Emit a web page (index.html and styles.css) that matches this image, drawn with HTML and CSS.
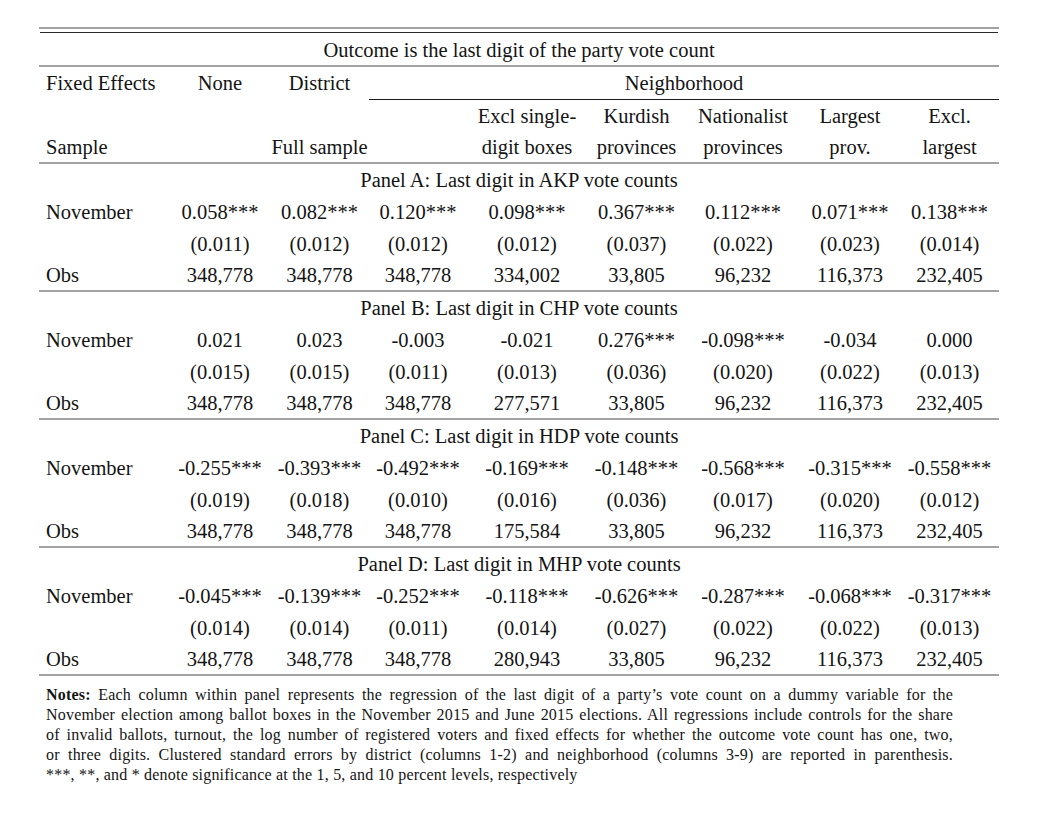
FILE: index.html
```html
<!DOCTYPE html>
<html>
<head>
<meta charset="utf-8">
<link rel="stylesheet" href="styles.css">
</head>
<body>
<div class="page">
  <div class="toprule"></div>
  <table class="reg">
    <colgroup>
      <col class="c-label"><col class="c1"><col class="c2"><col class="c3"><col class="c4"><col class="c5"><col class="c6"><col class="c7"><col class="c8">
    </colgroup>
    <tbody>
      <tr class="r-outcome"><td colspan="9" class="span midrule">Outcome is the last digit of the party vote count</td></tr>
      <tr class="r-fe">
        <td class="lab">Fixed Effects</td><td>None</td><td>District</td>
        <td colspan="6" class="cmid">Neighborhood</td>
      </tr>
      <tr class="r-h">
        <td class="lab"></td><td></td><td></td><td></td>
        <td>Excl single-</td><td>Kurdish</td><td>Nationalist</td><td>Largest</td><td>Excl.</td>
      </tr>
      <tr class="r-h last">
        <td class="lab">Sample</td><td></td><td>Full sample</td><td></td>
        <td>digit boxes</td><td>provinces</td><td>provinces</td><td>prov.</td><td>largest</td>
      </tr>

      <tr class="r-panel"><td colspan="9" class="span">Panel A: Last digit in AKP vote counts</td></tr>
      <tr class="r-row"><td class="lab">November</td><td>0.058***</td><td>0.082***</td><td>0.120***</td><td>0.098***</td><td>0.367***</td><td>0.112***</td><td>0.071***</td><td>0.138***</td></tr>
      <tr class="r-row"><td class="lab"></td><td>(0.011)</td><td>(0.012)</td><td>(0.012)</td><td>(0.012)</td><td>(0.037)</td><td>(0.022)</td><td>(0.023)</td><td>(0.014)</td></tr>
      <tr class="r-obs"><td class="lab">Obs</td><td>348,778</td><td>348,778</td><td>348,778</td><td>334,002</td><td>33,805</td><td>96,232</td><td>116,373</td><td>232,405</td></tr>

      <tr class="r-panel"><td colspan="9" class="span">Panel B: Last digit in CHP vote counts</td></tr>
      <tr class="r-row"><td class="lab">November</td><td>0.021</td><td>0.023</td><td>-0.003</td><td>-0.021</td><td>0.276***</td><td>-0.098***</td><td>-0.034</td><td>0.000</td></tr>
      <tr class="r-row"><td class="lab"></td><td>(0.015)</td><td>(0.015)</td><td>(0.011)</td><td>(0.013)</td><td>(0.036)</td><td>(0.020)</td><td>(0.022)</td><td>(0.013)</td></tr>
      <tr class="r-obs"><td class="lab">Obs</td><td>348,778</td><td>348,778</td><td>348,778</td><td>277,571</td><td>33,805</td><td>96,232</td><td>116,373</td><td>232,405</td></tr>

      <tr class="r-panel"><td colspan="9" class="span">Panel C: Last digit in HDP vote counts</td></tr>
      <tr class="r-row"><td class="lab">November</td><td>-0.255***</td><td>-0.393***</td><td>-0.492***</td><td>-0.169***</td><td>-0.148***</td><td>-0.568***</td><td>-0.315***</td><td>-0.558***</td></tr>
      <tr class="r-row"><td class="lab"></td><td>(0.019)</td><td>(0.018)</td><td>(0.010)</td><td>(0.016)</td><td>(0.036)</td><td>(0.017)</td><td>(0.020)</td><td>(0.012)</td></tr>
      <tr class="r-obs"><td class="lab">Obs</td><td>348,778</td><td>348,778</td><td>348,778</td><td>175,584</td><td>33,805</td><td>96,232</td><td>116,373</td><td>232,405</td></tr>

      <tr class="r-panel"><td colspan="9" class="span">Panel D: Last digit in MHP vote counts</td></tr>
      <tr class="r-row"><td class="lab">November</td><td>-0.045***</td><td>-0.139***</td><td>-0.252***</td><td>-0.118***</td><td>-0.626***</td><td>-0.287***</td><td>-0.068***</td><td>-0.317***</td></tr>
      <tr class="r-row"><td class="lab"></td><td>(0.014)</td><td>(0.014)</td><td>(0.011)</td><td>(0.014)</td><td>(0.027)</td><td>(0.022)</td><td>(0.022)</td><td>(0.013)</td></tr>
      <tr class="r-obs"><td class="lab">Obs</td><td>348,778</td><td>348,778</td><td>348,778</td><td>280,943</td><td>33,805</td><td>96,232</td><td>116,373</td><td>232,405</td></tr>
    </tbody>
  </table>
  <div class="notes">
    <div class="jl"><b>Notes:</b> Each column within panel represents the regression of the last digit of a party’s vote count on a dummy variable for the</div>
    <div class="jl">November election among ballot boxes in the November 2015 and June 2015 elections. All regressions include controls for the share</div>
    <div class="jl">of invalid ballots, turnout, the log number of registered voters and fixed effects for whether the outcome vote count has one, two,</div>
    <div class="jl">or three digits. Clustered standard errors by district (columns 1-2) and neighborhood (columns 3-9) are reported in parenthesis.</div>
    <div>***, **, and * denote significance at the 1, 5, and 10 percent levels, respectively</div>
  </div>
</div>
</body>
</html>
```

FILE: styles.css
```css
html, body {
  margin: 0;
  padding: 0;
  background: #ffffff;
}
body {
  font-family: "Liberation Serif", "Times New Roman", serif;
  color: #141414;
}
.page {
  padding: 27px 0 0 39px;
  width: 960px;
}
.toprule {
  height: 2px;
  background: #a3a3a3;
  border-bottom: 1px solid #ffffff;
  box-shadow: 0 4px 0 -1px #2a2a2a;
  margin-bottom: 5px;
}
.reg {
  width: 960px;
  border-collapse: separate;
  border-spacing: 0;
  table-layout: fixed;
  font-size: 20.5px;
  line-height: 1;
}
.c-label { width: 131px; }
.c1 { width: 100px; }
.c2 { width: 99px; }
.c3 { width: 98px; }
.c4 { width: 120px; }
.c5 { width: 99px; }
.c6 { width: 114px; }
.c7 { width: 100px; }
.c8 { width: 99px; }
.reg td {
  padding: 0;
  text-align: center;
  white-space: nowrap;
  vertical-align: middle;
}
.reg td.lab {
  text-align: left;
  padding-left: 7px;
}
.r-outcome td { height: 30px; }
.reg td.midrule { border-bottom: 2px solid #a3a3a3; }
.r-fe td { height: 32px; }
.reg td.cmid { border-bottom: 1px solid #1a1a1a; }
.r-h td { height: 32px; }
.r-h.last td { height: 30px; border-bottom: 2px solid #a3a3a3; }
.r-panel td { height: 32px; }
.r-row td { height: 32px; }
.r-obs td { height: 30px; border-bottom: 2px solid #a3a3a3; }
.notes {
  margin-top: 9px;
  padding: 0 46px 0 7px;
  font-size: 16px;
  letter-spacing: 0.2px;
  line-height: 20px;
}
.notes .jl {
  text-align: justify;
  text-align-last: justify;
  white-space: nowrap;
}
.notes b { font-weight: bold; }
```
